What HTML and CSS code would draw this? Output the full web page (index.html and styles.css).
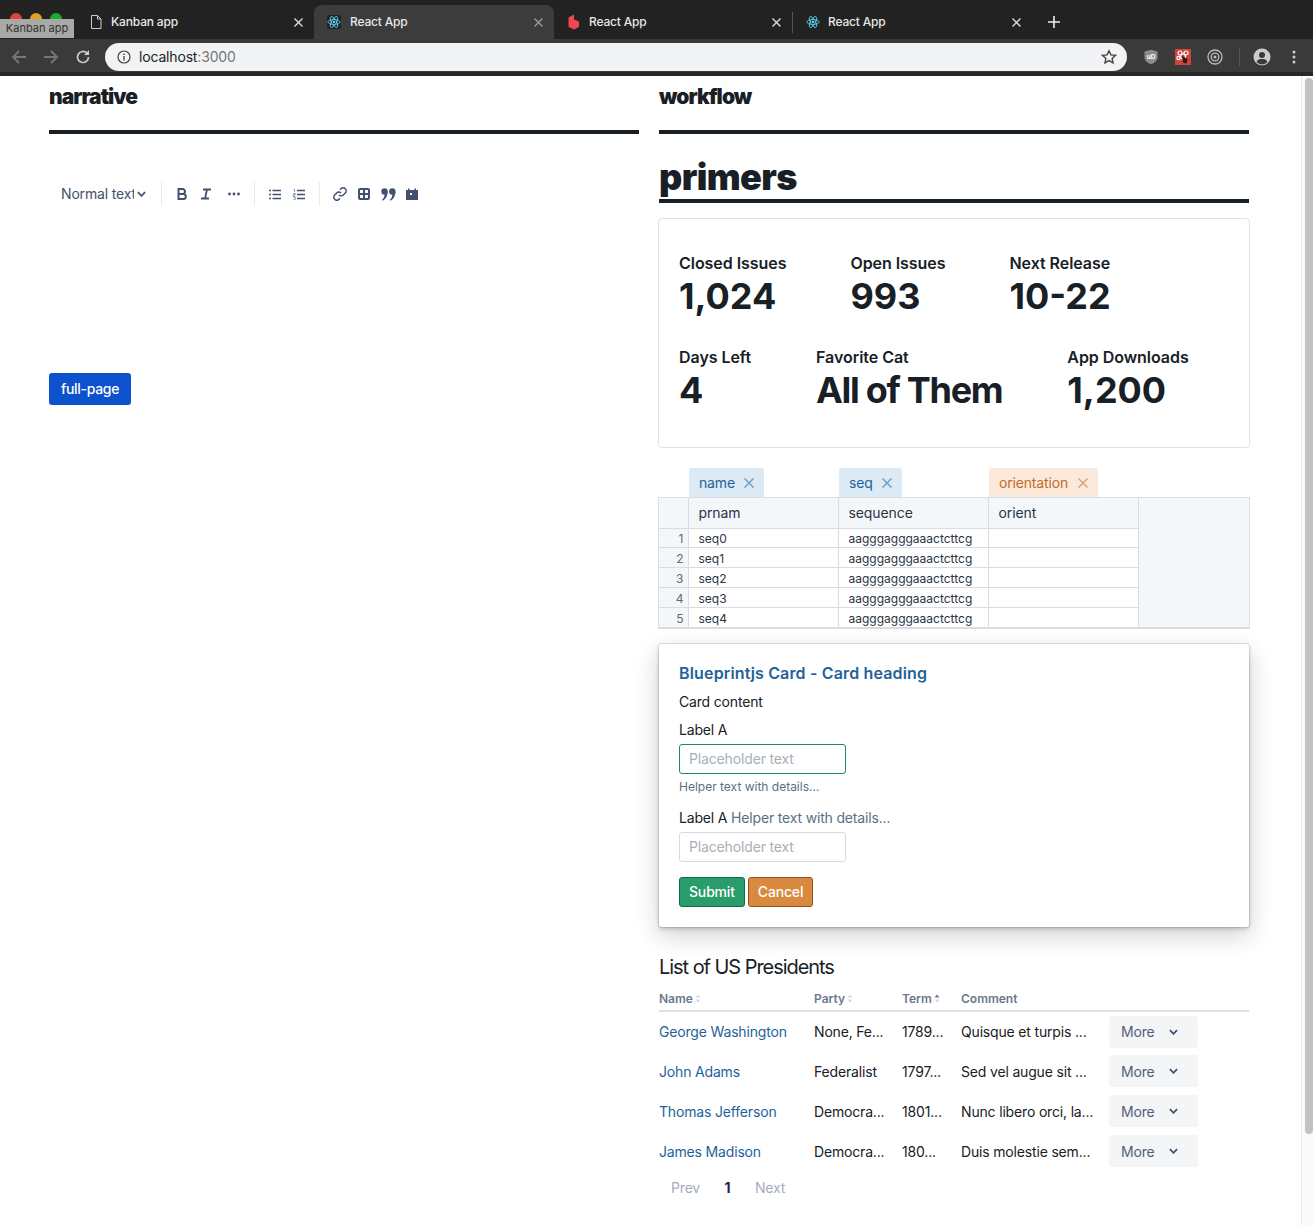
FILE: index.html
```html
<!DOCTYPE html>
<html lang="en">
<head>
<meta charset="utf-8">
<title>React App</title>
<link rel="stylesheet" href="styles.css">
</head>
<body>
<header class="chrome">
  <div class="tabstrip">
    <div class="traffic"><i class="dot red"></i><i class="dot amber"></i><i class="dot green"></i></div>
    <div class="tab first">
      <svg class="fav file" viewBox="0 0 13 16" width="13" height="16"><path d="M1.500 1.500h6l3.500 3.500v9.500h-9.500z M7.500 1.500v3.500h3.500" fill="none" stroke="#ccc" stroke-width="1"/></svg>
      <span class="tab-title">Kanban app</span><svg class="tab-x" viewBox="0 0 9 9" width="9" height="9"><path d="M.5.500l8 8M8.500.500l-8 8" stroke="#ddd" stroke-width="1.400"/></svg>
    </div>
    <div class="tab active">
      <svg class="fav" viewBox="0 0 16 16" width="14" height="14"><rect width="16" height="16" rx="2" fill="#222"/><g fill="none" stroke="#61dafb" stroke-width=".9"><ellipse cx="8" cy="8" rx="7" ry="2.800"/><ellipse cx="8" cy="8" rx="7" ry="2.800" transform="rotate(60 8 8)"/><ellipse cx="8" cy="8" rx="7" ry="2.800" transform="rotate(120 8 8)"/></g><circle cx="8" cy="8" r="1.400" fill="#61dafb"/></svg>
      <span class="tab-title">React App</span><svg class="tab-x" viewBox="0 0 9 9" width="9" height="9"><path d="M.5.500l8 8M8.500.500l-8 8" stroke="#999" stroke-width="1.400"/></svg>
    </div>
    <div class="tab sep">
      <svg class="fav" viewBox="0 0 14 16" width="14" height="16"><path d="M1.500 3.500L7 .5v5l5 2v5.500L7 15.500 1.500 13z" fill="#ef4650"/></svg>
      <span class="tab-title">React App</span><svg class="tab-x" viewBox="0 0 9 9" width="9" height="9"><path d="M.5.500l8 8M8.500.500l-8 8" stroke="#ddd" stroke-width="1.400"/></svg>
    </div>
    <div class="tab">
      <svg class="fav" viewBox="0 0 16 16" width="14" height="14"><g fill="none" stroke="#61dafb" stroke-width=".9"><ellipse cx="8" cy="8" rx="7" ry="2.800"/><ellipse cx="8" cy="8" rx="7" ry="2.800" transform="rotate(60 8 8)"/><ellipse cx="8" cy="8" rx="7" ry="2.800" transform="rotate(120 8 8)"/></g><circle cx="8" cy="8" r="1.400" fill="#61dafb"/></svg>
      <span class="tab-title">React App</span><svg class="tab-x" viewBox="0 0 9 9" width="9" height="9"><path d="M.5.500l8 8M8.500.500l-8 8" stroke="#ddd" stroke-width="1.400"/></svg>
    </div>
    <svg class="newtab" viewBox="0 0 12 12" width="12" height="12"><path d="M6 0v12M0 6h12" stroke="#eee" stroke-width="1.600"/></svg>
    <div class="tooltip">Kanban app</div>
  </div>
  <div class="toolbar">
    <svg class="nav" viewBox="0 0 16 16" width="16" height="16"><path d="M15 8H2M8 2L2 8l6 6" fill="none" stroke="#777" stroke-width="1.800"/></svg>
    <svg class="nav" viewBox="0 0 16 16" width="16" height="16"><path d="M1 8h13M8 2l6 6-6 6" fill="none" stroke="#777" stroke-width="1.800"/></svg>
    <svg class="nav" viewBox="0 0 16 16" width="16" height="16"><path d="M13.500 8a5.500 5.500 0 1 1-1.600-3.900" fill="none" stroke="#ccc" stroke-width="1.700"/><path d="M14 1v5h-5z" fill="#ccc"/></svg>
    <div class="omnibox">
      <svg class="info" viewBox="0 0 14 14" width="14" height="14"><circle cx="7" cy="7" r="6" fill="none" stroke="#444" stroke-width="1.200"/><path d="M7 6v4.500M7 3.500v1.400" stroke="#444" stroke-width="1.300"/></svg>
      <span class="url">localhost<span class="port">:3000</span></span>
      <svg class="star" viewBox="0 0 16 16" width="16" height="16"><path d="M8 1.800l1.900 4.100 4.500.5-3.300 3 .9 4.500L8 11.600l-4 2.300.9-4.500-3.300-3 4.500-.5z" fill="none" stroke="#444" stroke-width="1.400"/></svg>
    </div>
    <div class="ext">
      <svg viewBox="0 0 16 16" width="16" height="16"><path d="M1.500 2.500L8 .8l6.500 1.700v6c0 3-3.500 5.800-6.500 6.700-3-.9-6.500-3.700-6.500-6.700z" fill="#8c8c8c"/><text x="8" y="9.500" class="ub">uD</text></svg>
      <svg viewBox="0 0 16 16" width="16" height="16"><rect width="16" height="16" fill="#cf4338"/><g fill="none" stroke="#fff" stroke-width="1.200"><circle cx="5" cy="4" r="2"/><circle cx="11" cy="4" r="2"/><circle cx="3.500" cy="9" r="1.600"/><circle cx="8" cy="7.500" r="2.500"/></g><path d="M7 7l5.500 3-1 4.500-3.500-1z" fill="#2a1a1a"/></svg>
      <svg viewBox="0 0 16 16" width="16" height="16"><g fill="none" stroke="#bbb" stroke-width="1.300"><circle cx="8" cy="8" r="7"/><circle cx="8" cy="8" r="3.800"/></g><circle cx="8" cy="8" r="1.500" fill="#bbb"/></svg>
    </div>
    <i class="tool-sep"></i>
    <svg class="avatar" viewBox="0 0 18 18" width="18" height="18"><circle cx="9" cy="9" r="8.500" fill="#ccc"/><circle cx="9" cy="7" r="3" fill="#3a3a3a"/><path d="M3.500 14c1-2.500 3-3 5.500-3s4.500.5 5.500 3a7.500 7.500 0 0 1-11 0z" fill="#3a3a3a"/></svg>
    <svg class="kebab" viewBox="0 0 4 14" width="4" height="14"><g fill="#ccc"><circle cx="2" cy="2" r="1.500"/><circle cx="2" cy="7" r="1.500"/><circle cx="2" cy="12" r="1.500"/></g></svg>
  </div>
</header>

<div class="viewport">
  <main class="page">
    <section class="col">
      <h2 class="section-title">narrative</h2>
      <div class="editor-bar">
        <span class="style-select"><span class="style-text">Normal text</span><svg viewBox="0 0 10 6" width="9" height="6"><path d="M1 1l4 4 4-4" fill="none" stroke="#42526e" stroke-width="2"/></svg></span>
        <i class="bar-sep"></i>
        <div class="bar-group g-format">
          <svg viewBox="0 0 12 14" width="12" height="14"><path d="M2.500 2h4a2.500 2.500 0 0 1 0 5h-4zM2.500 7h4.800a2.500 2.500 0 0 1 0 5H2.500z" fill="none" stroke="#42526e" stroke-width="2"/></svg>
          <svg viewBox="0 0 12 14" width="12" height="14"><path d="M3 2.500h8M1 11.500h8M7 2.500l-2 9" fill="none" stroke="#42526e" stroke-width="1.800"/></svg>
          <svg class="dots" viewBox="0 0 12 4" width="12" height="4"><g fill="#42526e"><circle cx="1.500" cy="2" r="1.400"/><circle cx="6" cy="2" r="1.400"/><circle cx="10.500" cy="2" r="1.400"/></g></svg>
        </div>
        <i class="bar-sep"></i>
        <div class="bar-group g-list">
          <svg viewBox="0 0 12 11" width="12" height="11"><path d="M3.500 1.500H12M3.500 5.500H12M3.500 9.500H12" stroke="#42526e" stroke-width="1.500"/><g fill="#42526e"><circle cx="1" cy="1.500" r="1"/><circle cx="1" cy="5.500" r="1"/><circle cx="1" cy="9.500" r="1"/></g></svg>
          <svg viewBox="0 0 12 11" width="12" height="11"><path d="M4 1.500H12M4 5.500H12M4 9.500H12" stroke="#42526e" stroke-width="1.500"/><path d="M.5.500h1v2.500M.2 4.500h2v1.300H.2v1.400h2M.2 8h2v2.800H.2" fill="none" stroke="#42526e" stroke-width=".6"/></svg>
        </div>
        <i class="bar-sep"></i>
        <div class="bar-group g-insert">
          <svg viewBox="0 0 14 14" width="14" height="14"><path d="M6 8a3 3 0 0 0 4.300 0l2-2a3 3 0 0 0-4.300-4.300l-1 1M8 6a3 3 0 0 0-4.300 0l-2 2A3 3 0 0 0 6 12.300l1-1" fill="none" stroke="#42526e" stroke-width="1.500"/></svg>
          <svg viewBox="0 0 12 12" width="12" height="12"><path d="M2 1h8a1 1 0 0 1 1 1v8a1 1 0 0 1-1 1H2a1 1 0 0 1-1-1V2a1 1 0 0 1 1-1zM6 1v10M1 6h10" fill="none" stroke="#42526e" stroke-width="2"/></svg>
          <svg viewBox="0 0 15 13" width="15" height="13"><g fill="#42526e"><circle cx="3.500" cy="3.500" r="3.200"/><circle cx="11.300" cy="3.500" r="3.200"/><path d="M6.700 3.500c0 4.500-2 7.500-5 9.200l-.7-1c1.500-1 2.500-3 2.500-5zM14.500 3.500c0 4.500-2 7.500-5 9.200l-.7-1c1.500-1 2.500-3 2.500-5z"/></g></svg>
          <svg class="cal" viewBox="0 0 12 12" width="12" height="12"><path d="M0 2h2V.500h1.500V2h5V.500H10V2h2v10H0z" fill="#42526e"/><rect x="4" y="5" width="2" height="2" fill="#fff"/></svg>
        </div>
      </div>
      <button class="btn-primary" type="button">full-page</button>
    </section>

    <section class="col">
      <h2 class="section-title">workflow</h2>
      <h1 class="big-title">primers</h1>

      <div class="stats-card">
        <div class="stat-row">
          <div class="stat"><div class="stat-label">Closed Issues</div><div class="stat-value">1,024</div></div>
          <div class="stat"><div class="stat-label">Open Issues</div><div class="stat-value">993</div></div>
          <div class="stat"><div class="stat-label">Next Release</div><div class="stat-value">10-22</div></div>
        </div>
        <div class="stat-row wide">
          <div class="stat"><div class="stat-label">Days Left</div><div class="stat-value">4</div></div>
          <div class="stat"><div class="stat-label">Favorite Cat</div><div class="stat-value wordy">All of Them</div></div>
          <div class="stat"><div class="stat-label">App Downloads</div><div class="stat-value">1,200</div></div>
        </div>
      </div>

      <div class="tag-row">
        <div class="tag-cell"><span class="tag blue">name <svg viewBox="0 0 10 10" width="10" height="10"><path d="M.5.500l9 9M9.500.500l-9 9" stroke="currentColor" stroke-width="1.500"/></svg></span></div>
        <div class="tag-cell"><span class="tag blue">seq <svg viewBox="0 0 10 10" width="10" height="10"><path d="M.5.500l9 9M9.500.500l-9 9" stroke="currentColor" stroke-width="1.500"/></svg></span></div>
        <div class="tag-cell"><span class="tag orange">orientation <svg viewBox="0 0 10 10" width="10" height="10"><path d="M.5.500l9 9M9.500.500l-9 9" stroke="currentColor" stroke-width="1.500"/></svg></span></div>
      </div>
      <div class="sheet">
        <table class="grid">
          <thead><tr><th class="idx"></th><th>prnam</th><th>sequence</th><th>orient</th></tr></thead>
          <tbody>
            <tr><td class="idx">1</td><td>seq0</td><td>aagggagggaaactcttcg</td><td></td></tr>
            <tr><td class="idx">2</td><td>seq1</td><td>aagggagggaaactcttcg</td><td></td></tr>
            <tr><td class="idx">3</td><td>seq2</td><td>aagggagggaaactcttcg</td><td></td></tr>
            <tr><td class="idx">4</td><td>seq3</td><td>aagggagggaaactcttcg</td><td></td></tr>
            <tr><td class="idx">5</td><td>seq4</td><td>aagggagggaaactcttcg</td><td></td></tr>
          </tbody>
        </table>
      </div>

      <div class="bp-card">
        <h3 class="bp-title">Blueprintjs Card - Card heading</h3>
        <p class="bp-text">Card content</p>
        <label class="bp-label">Label A</label>
        <input class="bp-input focus" placeholder="Placeholder text">
        <div class="bp-helper">Helper text with details...</div>
        <label class="bp-label second">Label A <span class="muted">Helper text with details...</span></label>
        <input class="bp-input" placeholder="Placeholder text">
        <div class="bp-actions">
          <button class="btn submit" type="button">Submit</button>
          <button class="btn cancel" type="button">Cancel</button>
        </div>
      </div>

      <h3 class="list-title">List of US Presidents</h3>
      <table class="presidents">
        <thead>
          <tr>
            <th class="c-name">Name<svg class="sort" viewBox="0 0 6 9" width="6" height="9"><path d="M3 .500l2.500 3h-5zM3 8.500l2.500-3h-5z" fill="#d5d8e0"/></svg></th>
            <th class="c-party">Party<svg class="sort" viewBox="0 0 6 9" width="6" height="9"><path d="M3 .500l2.500 3h-5zM3 8.500l2.500-3h-5z" fill="#d5d8e0"/></svg></th>
            <th class="c-term">Term<svg class="sort" viewBox="0 0 6 9" width="6" height="9"><path d="M3 .500l2.500 3h-5z" fill="#6b778c"/><path d="M3 8.500l2.500-3h-5z" fill="#d5d8e0"/></svg></th>
            <th class="c-comment">Comment</th>
            <th></th>
          </tr>
        </thead>
        <tbody>
          <tr><td class="pres">George Washington</td><td>None, Fe...</td><td>1789...</td><td>Quisque et turpis ...</td><td><span class="more">More<svg viewBox="0 0 10 6" width="9" height="6"><path d="M1 1l4 4 4-4" fill="none" stroke="#42526e" stroke-width="2"/></svg></span></td></tr>
          <tr><td class="pres">John Adams</td><td>Federalist</td><td>1797...</td><td>Sed vel augue sit ...</td><td><span class="more">More<svg viewBox="0 0 10 6" width="9" height="6"><path d="M1 1l4 4 4-4" fill="none" stroke="#42526e" stroke-width="2"/></svg></span></td></tr>
          <tr><td class="pres">Thomas Jefferson</td><td>Democra...</td><td>1801...</td><td>Nunc libero orci, la...</td><td><span class="more">More<svg viewBox="0 0 10 6" width="9" height="6"><path d="M1 1l4 4 4-4" fill="none" stroke="#42526e" stroke-width="2"/></svg></span></td></tr>
          <tr><td class="pres">James Madison</td><td>Democra...</td><td>180...</td><td>Duis molestie sem...</td><td><span class="more">More<svg viewBox="0 0 10 6" width="9" height="6"><path d="M1 1l4 4 4-4" fill="none" stroke="#42526e" stroke-width="2"/></svg></span></td></tr>
        </tbody>
      </table>
      <nav class="pager"><span class="pg">Prev</span><span class="pg current">1</span><span class="pg">Next</span></nav>
    </section>
  </main>
  <div class="scrollbar"><div class="thumb"></div></div>
</div>
</body>
</html>
```
FILE: styles.css
```css
* { box-sizing: border-box; }
html, body { margin: 0; height: 100%; overflow: hidden; }
body {
  display: flex;
  flex-direction: column;
  font-family: Inter, "Liberation Sans", sans-serif;
  font-size: 14px;
  letter-spacing: -.17px;
  color: #182026;
  background: #fff;
}

/* browser chrome */
.chrome { flex: none; height: 76px; background: #3a3a3a; border-bottom: 4px solid #262626; }
.tabstrip {
  position: relative;
  display: flex;
  align-items: center;
  height: 39px;
  padding: 5px 0 0 77px;
  background: #222;
}
.traffic { position: absolute; left: 10px; top: 13px; display: flex; gap: 8px; }
.dot { width: 12px; height: 12px; border-radius: 50%; }
.red { background: #e0443e; }
.amber { background: #dea123; }
.green { background: #1aab29; }
.tooltip {
  position: absolute;
  left: 0;
  top: 19px;
  width: 74px;
  height: 19px;
  background: #a8a8a5;
  color: #333;
  font-size: 11px;
  line-height: 19px;
  text-align: center;
  letter-spacing: 0;
}
.tab {
  display: flex;
  align-items: center;
  width: 239px;
  height: 34px;
  padding: 0 11px 0 13px;
  color: #e8e8e8;
}
.tab.first { width: 237px; }
.tab.active { width: 240px; background: #3c3c3c; border-radius: 8px 8px 0 0; }
.tab.sep { border-right: 1px solid #555; height: 21px; }
.fav { flex: none; }
.tab-title { margin-left: 8px; padding-bottom: 2px; flex: 1; font-size: 12px; font-weight: 500; }
.active .tab-title { margin-left: 9px; }
.tab-x { flex: none; }
.newtab { margin-left: 16px; }
.toolbar { display: flex; align-items: center; height: 33px; padding: 2px 0 0 11px; }
.nav { margin-right: 16px; }
.omnibox {
  flex: none;
  display: flex;
  align-items: center;
  width: 1022px;
  height: 28px;
  margin-left: -2px;
  padding: 0 10px 0 12px;
  background: #f1f3f4;
  border-radius: 14px;
}
.url { flex: 1; margin-left: 8px; font-size: 14px; color: #222; }
.port { color: #777; }
.ext { display: flex; gap: 16px; margin-left: 16px; }
.ub { font-size: 6.500px; fill: #fff; text-anchor: middle; font-weight: 700; letter-spacing: 0; }
.tool-sep { width: 1px; height: 18px; background: #555; margin: 0 13px 0 16px; }
.kebab { margin-left: 21px; }

/* page */
.viewport { flex: 1; min-height: 0; display: flex; }
.page { flex: 1; min-width: 0; display: flex; gap: 20px; padding: 0 52px 0 49px; }
.scrollbar { flex: none; width: 12px; padding: 2px 0 0 3px; border-left: 1px solid #e8e8e8; background: #fafafa; }
.thumb { height: 1056px; border-radius: 4px; background: #c2c2c2; }
.col { flex: 0 0 590px; width: 590px; min-width: 0; }

.section-title {
  margin: 0;
  height: 58px;
  padding-top: 8px;
  border-bottom: 4px solid #182026;
  font-size: 21px;
  line-height: 26px;
  font-weight: 900;
  letter-spacing: -.95px;
  color: #182026;
}
.editor-bar {
  display: flex;
  align-items: center;
  height: 24px;
  margin-top: 48px;
  padding-left: 12px;
  color: #42526e;
}
.style-select { display: flex; align-items: center; width: 100px; }
.style-text { width: 73px; overflow: hidden; white-space: nowrap; font-size: 14px; line-height: 22px; }
.style-select svg { margin-left: 3px; }
.bar-sep { width: 1px; height: 24px; background: #ebecf0; }
.bar-group { display: flex; align-items: center; }
.g-format { gap: 12px; padding: 0 14px; }
.g-format .dots { margin-left: 4px; }
.g-list { gap: 12px; padding: 0 14px; }
.g-insert { gap: 11px; padding: 0 13px; }
.g-insert .cal { margin-left: -1px; }
.btn-primary {
  display: block;
  width: 82px;
  height: 32px;
  margin-top: 167px;
  padding: 0 0 2px;
  border: 0;
  border-radius: 3px;
  background: #0b52cc;
  color: #fff;
  font: 500 14px Inter, "Liberation Sans", sans-serif;
  letter-spacing: -.3px;
}

.big-title {
  margin: 24px 0 0;
  height: 45px;
  border-bottom: 4px solid #182026;
  font-size: 36px;
  line-height: 38px;
  font-weight: 900;
  letter-spacing: -.6px;
  color: #182026;
}
.stats-card {
  width: 592px;
  height: 230px;
  margin: 15px 0 0 -1px;
  padding: 34px 20px 0;
  border: 1px solid #dfe1e6;
  border-radius: 4px;
}
.stat-row { display: flex; gap: 64px; height: 94px; }
.stat-row.wide { gap: 65px; }
.stat-label { font-size: 16px; line-height: 20px; font-weight: 600; letter-spacing: -.05px; }
.stat-value { font-size: 36px; line-height: 46px; font-weight: 700; letter-spacing: 0; }
.stat-value.wordy { letter-spacing: -1.3px; }

.tag-row { display: flex; height: 29px; margin-top: 20px; padding-left: 30px; }
.tag-cell { width: 150px; }
.tag {
  display: inline-flex;
  align-items: center;
  gap: 9px;
  height: 29px;
  padding: 0 10px;
  border-radius: 3px 3px 0 0;
  font-size: 14px;
}
.tag svg { opacity: .55; }
.tag.blue { background: #dceaf5; color: #1f6299; }
.tag.orange { gap: 10px; background: #fbeadb; color: #c46a26; }

.sheet { width: 592px; height: 132px; margin-left: -1px; background: #f3f7fa; border: 1px solid #d8e0e6; border-bottom: 2px solid #d8dde3; }
.grid { border-collapse: collapse; table-layout: fixed; width: 479px; font-size: 12px; letter-spacing: 0; color: #2a3444; background: #fff; }
.grid th, .grid td { border: 1px solid #d8dde3; padding: 0 0 0 10px; overflow: hidden; white-space: nowrap; }
.grid tr > :first-child { border-left: 0; }
.grid thead th { border-top: 0; }
.grid th { height: 30px; width: 150px; background: #f3f7fa; font-size: 14px; font-weight: 400; letter-spacing: -.1px; text-align: left; }
.grid th.idx { width: 29px; }
.grid td { height: 20px; padding-top: 2px; line-height: 17px; }
.grid tbody tr:first-child td { height: 19px; padding-top: 1px; }
.grid tbody tr:last-child td { border-bottom: 0; }
.grid td.idx { background: #f3f7fa; padding-right: 4px; padding-left: 0; text-align: right; color: #5c6b7a; }

.bp-card {
  height: 283px;
  margin-top: 15px;
  padding: 18px 20px;
  border-radius: 3px;
  background: #fff;
  box-shadow: 0 0 0 1px rgba(16,22,26,.1), 0 2px 4px rgba(16,22,26,.2), 0 8px 24px rgba(16,22,26,.2);
}
.bp-title { margin: 0; font-size: 16px; line-height: 22px; font-weight: 600; letter-spacing: .16px; color: #1f6299; }
.bp-text { margin: 8px 0 0; line-height: 20px; }
.bp-label { display: block; margin-top: 8px; line-height: 20px; }
.bp-label.second { margin-top: 13px; }
.muted { color: #5c7080; }
.bp-input {
  display: block;
  width: 167px;
  height: 30px;
  margin-top: 4px;
  padding: 0 9px 2px;
  border: 1px solid #d8dce0;
  border-radius: 3px;
  font: 14px Inter, "Liberation Sans", sans-serif;
  letter-spacing: -.15px;
  outline: 0;
}
.bp-input::placeholder { color: #a7b0b9; opacity: 1; }
.bp-input.focus { border-color: #1f8a5f; }
.bp-helper { margin-top: 5px; font-size: 12px; line-height: 16px; letter-spacing: 0; color: #5c7080; }
.bp-actions { display: flex; gap: 3px; margin-top: 15px; }
.btn {
  height: 30px;
  padding: 0 9px 2px;
  border-radius: 3px;
  color: #fff;
  font: 500 14px Inter, "Liberation Sans", sans-serif;
  letter-spacing: -.17px;
}
.submit { background: #299c6b; border: 1px solid #146b48; }
.cancel { background: #d98a3e; border: 1px solid #8a5526; }

.list-title { margin: 28px 0 0; font-size: 20px; line-height: 25px; font-weight: 400; letter-spacing: -1.05px; }
.presidents { width: 590px; margin-top: 8px; border-collapse: collapse; table-layout: fixed; font-size: 14px; }
.presidents th {
  height: 23px;
  padding: 0 0 2px;
  border-bottom: 2px solid #dfe1e6;
  text-align: left;
  font-size: 12px;
  font-weight: 600;
  letter-spacing: 0;
  color: #6b778c;
}
.c-name { width: 155px; }
.c-party { width: 88px; }
.c-term { width: 59px; }
.c-comment { width: 148px; }
.sort { margin-left: 2px; }
.presidents td { height: 40px; padding: 0; white-space: nowrap; }
.presidents td.pres { color: #1f6299; }
.more {
  display: inline-flex;
  align-items: center;
  gap: 14px;
  width: 89px;
  height: 32px;
  padding: 0 12px;
  border-radius: 3px;
  background: #f4f5f7;
  color: #505f79;
}
.pager { display: flex; align-items: center; height: 32px; padding-left: 12px; gap: 24.500px; color: #a5adba; }
.pg.current { color: #172b4d; font-weight: 700; }
```
